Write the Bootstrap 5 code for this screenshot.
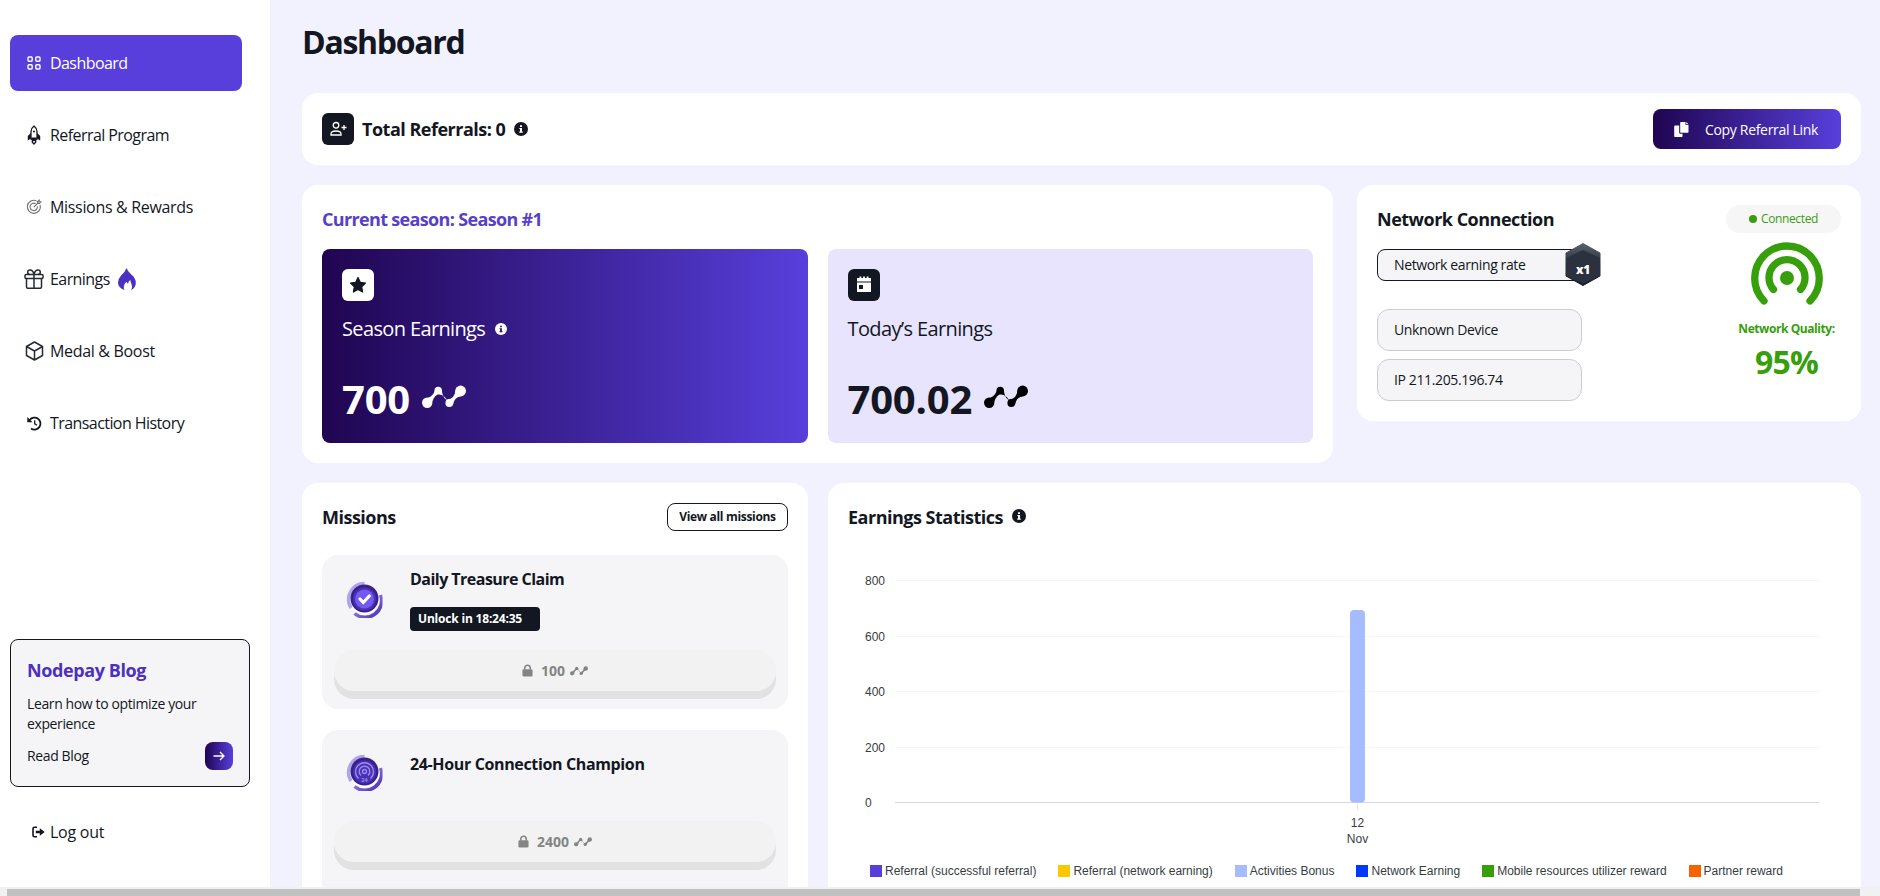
<!DOCTYPE html>
<html lang="en">
<head>
    <meta charset="UTF-8">
    <meta name="viewport" content="width=device-width, initial-scale=1.0">
    <title>Nodepay - Dashboard</title>
    <link href="https://cdn.jsdelivr.net/npm/bootstrap@5.3.0/dist/css/bootstrap.min.css" rel="stylesheet">
    <style>
        body { font-family: "Open Sans", "Noto Sans", sans-serif; color: #131722; background: #f2f2ff; font-size: 14px; line-height: 20px; letter-spacing: -.38px; }
        svg { display: block; flex-shrink: 0; }
        .shell { height: 887px; }
        .side { width: 270px; padding: 35px 10px 0; flex-shrink: 0; }
        .side .nav-link { width: 232px; height: 56px; margin-bottom: 16px; padding: 0 14px; border-radius: 8px; color: #131722; font-size: 16px; letter-spacing: -.57px; gap: 6px; }
        .side .nav-link.wider { letter-spacing: -.32px; }
        .side .nav-link.active { background: #583fdc; color: #fff; }
        .side .nav-link.logout { margin-top: 17px; letter-spacing: -.25px; }
        .side .slot { width: 20px; display: flex; justify-content: center; flex-shrink: 0; }
        .blog { width: 240px; height: 148px; margin-top: 172px; padding: 16px 16px 0; background: #f5f5f7; border: 1px solid #131722; border-radius: 8px; }
        .blog h5 { font-size: 18px; font-weight: 700; line-height: 28px; color: #4c30c0; letter-spacing: -.4px; margin-bottom: 10px; }
        .grad { background: linear-gradient(90deg, #1f0550, #583fdc); }
        .go { width: 28px; height: 28px; border-radius: 8px; }
        .main { padding: 0 19px 0 32px; }
        .main h1 { font-size: 32px; font-weight: 700; line-height: 40px; letter-spacing: -1.3px; margin: 22px 0 31px; }
        .panel { background: #fff; border-radius: 16px; padding: 20px; }
        .referrals { height: 72px; }
        .panel-row { margin-top: 20px; }
        .ttl { font-size: 18px; font-weight: 700; line-height: 28px; letter-spacing: -.5px; margin: 0; }
        .tile { width: 32px; height: 32px; border-radius: 6px; background: #131722; }
        .copy { width: 188px; height: 40px; border-radius: 8px; font-size: 14px; font-weight: 500; letter-spacing: -.32px; padding-left: 21px; gap: 16px; }
        .stat { width: 486px; height: 194px; border-radius: 8px; padding: 20px; }
        .stat .cap { font-size: 20px; line-height: 28px; letter-spacing: -.63px; margin-top: 14px; }
        .stat .num { font-size: 40px; font-weight: 700; line-height: 48px; letter-spacing: -.2px; margin-top: 32px; gap: 12px; }
        .rate { width: 206px; height: 32px; border: 1px solid #131722; border-radius: 8px; background: #f5f5f7; padding-left: 16px; }
        .hexa { position: absolute; left: 187px; top: -7px; }
        .dev { width: 205px; height: 42px; border: 1px solid #ccccce; border-radius: 12px; background: #f5f5f7; padding-left: 16px; }
        .green { color: #369f0b; }
        .online { width: 115px; height: 28px; border-radius: 14px; background: #f6f6f6; font-size: 12px; gap: 4px; }
        .viewall { width: 121px; height: 28px; border: 1px solid #131722; border-radius: 8px; font-size: 12px; font-weight: 700; letter-spacing: -.32px; }
        .mission { background: #f5f5f8; border-radius: 16px; }
        .mission h6 { font-size: 16px; font-weight: 700; line-height: 24px; letter-spacing: -.53px; margin: 0; }
        .medal { margin: 26px 27px 0 24px; }
        .lockpill { width: 130px; height: 24px; border-radius: 4px; background: #131722; color: #fff; font-size: 12px; font-weight: 700; letter-spacing: -.19px; padding-left: 8px; margin-top: 16px; }
        .claim { width: 442px; height: 41px; margin-left: 12px; border-radius: 20px; background: #f2f2f2; box-shadow: 0 8px 0 #e2e2e2; color: #848484; font-weight: 700; letter-spacing: 0; }
        .legend-row { font: 12px "Liberation Sans", Arial, sans-serif; letter-spacing: 0; color: #373d3f; gap: 22px; margin: 6px 0 0 22px; line-height: 14px; }
        .legend-row span { display: flex; align-items: center; gap: 3px; }
        .legend-row i { width: 12px; height: 12px; }
        .hscroll { height: 9px; background: #f1f1f1; padding: 2px 20px 0 7px; }
        .hscroll div { height: 7px; background: #c1c1c1; }
    </style>
</head>
<body class="overflow-hidden">
    <!-- shared icons -->
    <svg width="0" height="0" class="position-absolute">
        <defs>
            <linearGradient id="ring" x1="0" y1="0" x2="1" y2="1"><stop offset="0" stop-color="#b5a9ee"/><stop offset="1" stop-color="#4526b5"/></linearGradient>
            <linearGradient id="hexg" x1="0" y1="0" x2="0" y2="1"><stop offset="0" stop-color="#5a5f6c"/><stop offset=".5" stop-color="#2c3140"/><stop offset="1" stop-color="#131722"/></linearGradient>
            <symbol id="info" viewBox="0 0 14 14"><circle cx="7" cy="7" r="7" fill="currentColor"/><path d="M6 3.3h2v1.6H6zM5.3 6H8v3.6h.8v1.1H5.2V9.6H6V7.1h-.7z" fill="var(--hole)"/></symbol>
            <symbol id="points" viewBox="0 0 44 24">
                <g fill="currentColor"><circle cx="5.200" cy="17.800" r="5.200"/><circle cx="16.200" cy="5.400" r="3.700"/><circle cx="27.300" cy="18" r="3.900"/><circle cx="38.600" cy="6" r="5.400"/>
                <path d="M6 12.800q5-1.500 6.700-7l4.800 3q-5 1-7.300 8.200zM19.800 4.500q.5 8 4.700 10.500l5.700 1-3.700 4q-1-10-11.500-11zM26 14.500q6.500-1 7.500-9l5 6q-6 .500-7.500 8z"/></g>
            </symbol>
            <symbol id="lock" viewBox="0 0 12 14"><path d="M3 6V4.200a3 3 0 0 1 6 0V6" fill="none" stroke="currentColor" stroke-width="1.700"/><rect x=".5" y="5.600" width="11" height="8" rx="1.500" fill="currentColor"/></symbol>
            <!-- round medal base with open outer ring -->
            <symbol id="medal" viewBox="0 0 36 37">
                <circle cx="18" cy="18.500" r="15" fill="#fff"/>
                <path d="M18 2.500A16 16 0 0 0 4.500 27" fill="none" stroke="#b0a5ea" stroke-width="3.500"/>
                <path d="M34 14A16.500 16.500 0 0 1 8 32.500" fill="none" stroke="url(#ring)" stroke-width="3.500"/>
                <circle cx="18" cy="17.500" r="14" fill="#38218c"/>
                <circle cx="18" cy="18" r="11.500" fill="#4a31b4"/>
            </symbol>
        </defs>
    </svg>

    <div class="shell d-flex overflow-hidden">
        <aside class="side bg-white">
            <nav class="nav flex-column">
                <a class="nav-link active d-flex align-items-center" href="#"><span class="slot"><svg width="14" height="14" viewBox="0 0 14 14" fill="none" stroke="#fff" stroke-width="1.400"><rect x="1" y="1" width="4.200" height="4.200" rx="1"/><rect x="8.800" y="1" width="4.200" height="4.200" rx="1"/><rect x="1" y="8.800" width="4.200" height="4.200" rx="1"/><rect x="8.800" y="8.800" width="4.200" height="4.200" rx="1"/></svg></span>Dashboard</a>
                <a class="nav-link d-flex align-items-center" href="#"><span class="slot"><svg width="14" height="20" viewBox="0 0 14 20"><path d="M4 14V6.500Q4.300 3 7 1q2.700 2 3 5.500V14z" fill="none" stroke="#131722" stroke-width="1.300"/><path d="M3.800 8L.8 11v4.500L4 13.500zM10.200 8l3 3v4.500L10 13.500z" fill="#131722"/><path d="M4.500 12.500h5V15h-5z" fill="#131722"/><circle cx="7" cy="6.500" r="1" fill="#131722"/><path d="M5.300 15.500h3.400v1.700L7 19l-1.700-1.800z" fill="none" stroke="#131722" stroke-width="1.300"/></svg></span>Referral Program</a>
                <a class="nav-link wider d-flex align-items-center" href="#"><span class="slot"><svg width="16" height="16" viewBox="0 0 16 16" fill="none" stroke="#707278" stroke-width="1.100"><path d="M10.500 1.900A6.500 6.500 0 1 0 14.100 6"/><path d="M9.600 4.700A3.700 3.700 0 1 0 11.400 7.500"/><path d="M7.800 8.200L12.500 3.500M11.500 4.500V2.500l1.700-1.300v1.600h1.700L13.500 4.500z"/></svg></span>Missions &amp; Rewards</a>
                <a class="nav-link d-flex align-items-center" href="#"><span class="slot"><svg width="20" height="20" viewBox="0 0 20 20" fill="none" stroke="#252a35" stroke-width="1.500"><rect x="1" y="5.500" width="18" height="4" rx="1"/><path d="M2.500 9.500V18q0 1.200 1.200 1.200h12.600q1.200 0 1.200-1.200V9.500M10 5.500v13.500M10 5.500Q9 1 6 1 3.700 1 3.700 3.200T6 5.500M10 5.500Q11 1 14 1q2.300 0 2.300 2.200T14 5.500"/></svg></span>Earnings
                    <svg style="margin-left: 1px" width="20" height="24" viewBox="0 0 20 24"><path d="M9.500 1q1 3.200 4.800 6.500Q18.800 11 18.800 16q0 4.500-4.500 7 1.500-3.200.2-6-1-2.200-1.200-4-1.900 1.300-2.300 3.800-1.200-.8-1.500-2-2.500 2.200-2.700 4.700-.1 2 .7 3.500Q1 20.500 1 15.700q0-4 3.300-7.500Q8.500 4.500 9.500 1z" fill="#4c30c0"/></svg></a>
                <a class="nav-link wider d-flex align-items-center" href="#"><span class="slot"><svg width="19" height="20" viewBox="0 0 19 20" fill="none" stroke="#252a35" stroke-width="1.500" stroke-linejoin="round"><path d="M9.500 1l8 4.500v9l-8 4.500-8-4.500v-9zM1.500 5.500l8 4.500 8-4.500M9.500 10v9"/></svg></span>Medal &amp; Boost</a>
                <a class="nav-link d-flex align-items-center" href="#"><span class="slot"><svg width="15" height="15" viewBox="0 0 15 15" fill="none" stroke="#131722" stroke-width="1.800"><path d="M2.700 4A6 6 0 1 1 4 12.500"/><path d="M7.700 4.200v3.600l2.300 1.500" stroke-width="1.300"/><path d="M.3 1v5.200h5.200z" fill="#131722" stroke="none"/></svg></span>Transaction History</a>
            </nav>
            <div class="blog">
                <h5>Nodepay Blog</h5>
                <div>Learn how to optimize your<br>experience</div>
                <div class="d-flex justify-content-between align-items-center mt-2">Read Blog
                    <span class="go grad d-flex align-items-center justify-content-center"><svg width="12" height="10" viewBox="0 0 12 10" fill="none" stroke="#fff" stroke-width="1.300"><path d="M.5 5h10.500M7 1l4 4-4 4"/></svg></span>
                </div>
            </div>
            <a class="nav-link logout d-flex align-items-center" href="#"><span class="slot ps-2"><svg width="13" height="12" viewBox="0 0 13 12"><path d="M5 1.200H2.500Q1 1.200 1 2.700v6.600q0 1.500 1.500 1.500H5" fill="none" stroke="#131722" stroke-width="1.600"/><path d="M3.800 4.700h4V2.200L12.700 6 7.800 9.800V7.300h-4z" fill="#131722"/></svg></span>Log out</a>
        </aside>

        <main class="main flex-grow-1">
            <h1>Dashboard</h1>

            <div class="panel referrals d-flex align-items-center py-0">
                <span class="tile d-flex align-items-center justify-content-center me-2"><svg width="17" height="16" viewBox="0 0 17 16" fill="none" stroke="#fff" stroke-width="1.300"><circle cx="6" cy="4.300" r="2.800"/><path d="M1 14v-1q0-3 5-3t5 3v1zM14 4v5M11.500 6.500h5"/></svg></span>
                <h2 class="ttl">Total Referrals: 0</h2>
                <svg style="margin-left: 9px; --hole: #fff" width="14" height="14"><use href="#info"/></svg>
                <button class="btn copy grad text-white border-0 d-flex align-items-center ms-auto py-0 pe-0"><svg width="15" height="15" viewBox="0 0 15 15" fill="#fff"><path d="M7 0h4.500v3H14.500v7q0 .8-.8.8H7q-.8 0-.8-.8V.8Q6.200 0 7 0zM12.300 0l2.200 2.200h-2.200zM1 3.500h4.200v7q0 1.300 1.300 1.300h2v2.400q0 .8-.8.800H1q-.8 0-.8-.8V4.300q0-.8.8-.8z"/></svg>Copy Referral Link</button>
            </div>

            <div class="panel-row d-flex align-items-start" style="gap: 24px">
                <section class="panel" style="width: 1031px; height: 278px">
                    <h2 class="ttl" style="color: #583fc8; letter-spacing: -.66px; margin-bottom: 16px">Current season: Season #1</h2>
                    <div class="d-flex" style="gap: 20px">
                        <div class="stat grad text-white">
                            <span class="tile bg-white d-flex align-items-center justify-content-center"><svg width="18" height="18" viewBox="0 0 18 18"><path d="M9 1.500l2.300 4.800 5.200.7-3.800 3.700.9 5.300L9 13.500 4.400 16l.9-5.300L1.500 7l5.200-.7z" fill="#131722" stroke="#131722" stroke-width="1.200" stroke-linejoin="round"/></svg></span>
                            <div class="cap d-flex align-items-center">Season Earnings<svg style="margin-left: 10px; --hole: #260c64" width="12" height="12"><use href="#info"/></svg></div>
                            <div class="num d-flex align-items-center">700<svg class="mb-1" width="44" height="24"><use href="#points"/></svg></div>
                        </div>
                        <div class="stat" style="background: #e8e4fe">
                            <span class="tile d-flex align-items-center justify-content-center"><svg width="16" height="18" viewBox="0 0 16 18"><path d="M1 2h2.500V.5h1.800V2h1.800V.5h1.800V2h1.800V.5h1.800V2H15v3.500H1z" fill="#fff"/><path d="M1 6.500h14V16H1z" fill="#fff"/><path d="M3 9h4v4H3z" fill="#131722"/></svg></span>
                            <div class="cap">Today’s Earnings</div>
                            <div class="num d-flex align-items-center">700.02<svg class="text-black mb-1" width="44" height="24"><use href="#points"/></svg></div>
                        </div>
                    </div>
                </section>

                <section class="panel d-flex justify-content-between" style="width: 504px; height: 236px">
                    <div>
                        <h2 class="ttl mb-3">Network Connection</h2>
                        <div class="rate d-flex align-items-center position-relative">Network earning rate
                            <svg class="hexa" width="36" height="43" viewBox="0 0 36 43"><path d="M18 .5l17 9.500v23L18 42.500 1 33V10z" fill="url(#hexg)" stroke="url(#hexg)" stroke-linejoin="round"/><path d="M18 7l17 8v17.500L18 41 1 32.500V15z" fill="#2c3140"/><text x="18" y="31" text-anchor="middle" font-size="12" font-weight="800" fill="#fff">x1</text></svg>
                        </div>
                        <div class="dev d-flex align-items-center" style="margin-top: 28px">Unknown Device</div>
                        <div class="dev d-flex align-items-center mt-2">IP 211.205.196.74</div>
                    </div>
                    <div class="d-flex flex-column align-items-center green">
                        <div class="online d-flex align-items-center justify-content-center"><svg width="8" height="8"><circle cx="4" cy="4" r="4" fill="#369f0b"/></svg>Connected</div>
                        <svg style="margin: 8px 0 0 6px" width="72" height="64" viewBox="-36 -36 72 64" fill="none" stroke="#369f0b" stroke-width="7.300" stroke-linecap="round"><path d="M-23 24A32.300 32.300 0 1 1 23 24M-13.500 12.500A18 18 0 1 1 13.500 12.500"/><circle cx="0" cy="1" r="7" fill="#369f0b" stroke="none"/></svg>
                        <div class="fw-bold" style="font-size: 12px; margin: 14px 0 0 6px; letter-spacing: -.43px">Network Quality:</div>
                        <div class="fw-bold" style="font-size: 32px; line-height: 46px; letter-spacing: -.8px; margin-left: 6px">95%</div>
                    </div>
                </section>
            </div>

            <div class="panel-row d-flex" style="gap: 20px">
                <section class="panel" style="width: 506px; height: 460px">
                    <div class="d-flex justify-content-between align-items-start" style="height: 52px">
                        <h2 class="ttl">Missions</h2>
                        <a href="#" class="viewall d-flex align-items-center justify-content-center text-decoration-none text-reset">View all missions</a>
                    </div>
                    <div class="mission" style="height: 154px">
                        <div class="d-flex" style="height: 95px">
                            <svg class="medal" width="37" height="37" viewBox="0 0 36 37"><use href="#medal" width="36" height="37"/><circle cx="18" cy="18" r="9.500" fill="#7259f3"/><path d="M13.500 18l3.300 3.500 6-6.500" fill="none" stroke="#fff" stroke-width="3.200" stroke-linecap="round"/></svg>
                            <div style="padding-top: 12px">
                                <h6>Daily Treasure Claim</h6>
                                <div class="lockpill d-flex align-items-center">Unlock in 18:24:35</div>
                            </div>
                        </div>
                        <div class="claim d-flex align-items-center justify-content-center"><svg width="11" height="13"><use href="#lock"/></svg><span style="margin: 0 5px 0 8px">100</span><svg width="18" height="10"><use href="#points"/></svg></div>
                    </div>
                    <div class="mission" style="height: 190px; margin-top: 21px">
                        <div class="d-flex" style="height: 91px">
                            <svg class="medal" style="margin-top: 24px" width="37" height="37" viewBox="0 0 36 37"><use href="#medal" width="36" height="37"/><g fill="none" stroke="#9c8cf0" stroke-width="1.400"><path d="M12 24.500A9 9 0 1 1 24 24.500M14.500 21.500A5.300 5.300 0 1 1 21.500 21.500"/><circle cx="18" cy="17.500" r="2"/></g><text x="18" y="28" text-anchor="middle" font-size="5.500" font-weight="700" letter-spacing="0" fill="#9c8cf0">24</text></svg>
                            <h6 style="padding-top: 22px; letter-spacing: -.36px">24-Hour Connection Champion</h6>
                        </div>
                        <div class="claim d-flex align-items-center justify-content-center"><svg width="11" height="13"><use href="#lock"/></svg><span style="margin: 0 5px 0 8px">2400</span><svg width="18" height="10"><use href="#points"/></svg></div>
                    </div>
                </section>

                <section class="panel" style="width: 1033px; height: 460px">
                    <div class="d-flex" style="height: 30px">
                        <h2 class="ttl">Earnings Statistics</h2>
                        <svg style="margin: 6px 0 0 9px; --hole: #fff" width="14" height="14"><use href="#info"/></svg>
                    </div>
                    <svg width="993" height="325" viewBox="0 0 993 325" font-family="Liberation Sans, Arial, sans-serif" font-size="12" letter-spacing="0" fill="#373d3f">
                        <g id="grid"></g>
                        <path d="M509.500 270v7" stroke="#e6e6e6"/>
                        <rect x="502" y="77" width="15" height="192.500" rx="4" fill="#a5bcff"/>
                        <g text-anchor="middle"><text x="509.500" y="293.500">12</text><text x="509.500" y="309.500">Nov</text></g>
                    </svg>
                    <div class="legend-row d-flex">
                        <span><i style="background: #583fdc"></i>Referral (successful referral)</span>
                        <span><i style="background: #ffc700"></i>Referral (network earning)</span>
                        <span><i style="background: #a5bcff"></i>Activities Bonus</span>
                        <span><i style="background: #0038ff"></i>Network Earning</span>
                        <span><i style="background: #369f0b"></i>Mobile resources utilizer reward</span>
                        <span><i style="background: #fa5f00"></i>Partner reward</span>
                    </div>
                </section>
            </div>
        </main>
    </div>
    <div class="hscroll"><div></div></div>

    <script src="https://cdn.jsdelivr.net/npm/bootstrap@5.3.0/dist/js/bootstrap.bundle.min.js"></script>
    <script>
        // y axis: labels and grid lines
        let rows = "";
        [800, 600, 400, 200, 0].forEach((v, i) => {
            let y = 47.5 + Math.round(i * 55.5);
            rows += `<text x="17" y="${y + 4}">${v}</text><path d="M47 ${y}H971" stroke="${v ? "#f7f7f7" : "#d6d6d6"}"/>`;
        });
        document.getElementById("grid").innerHTML = rows;
    </script>
</body>
</html>
